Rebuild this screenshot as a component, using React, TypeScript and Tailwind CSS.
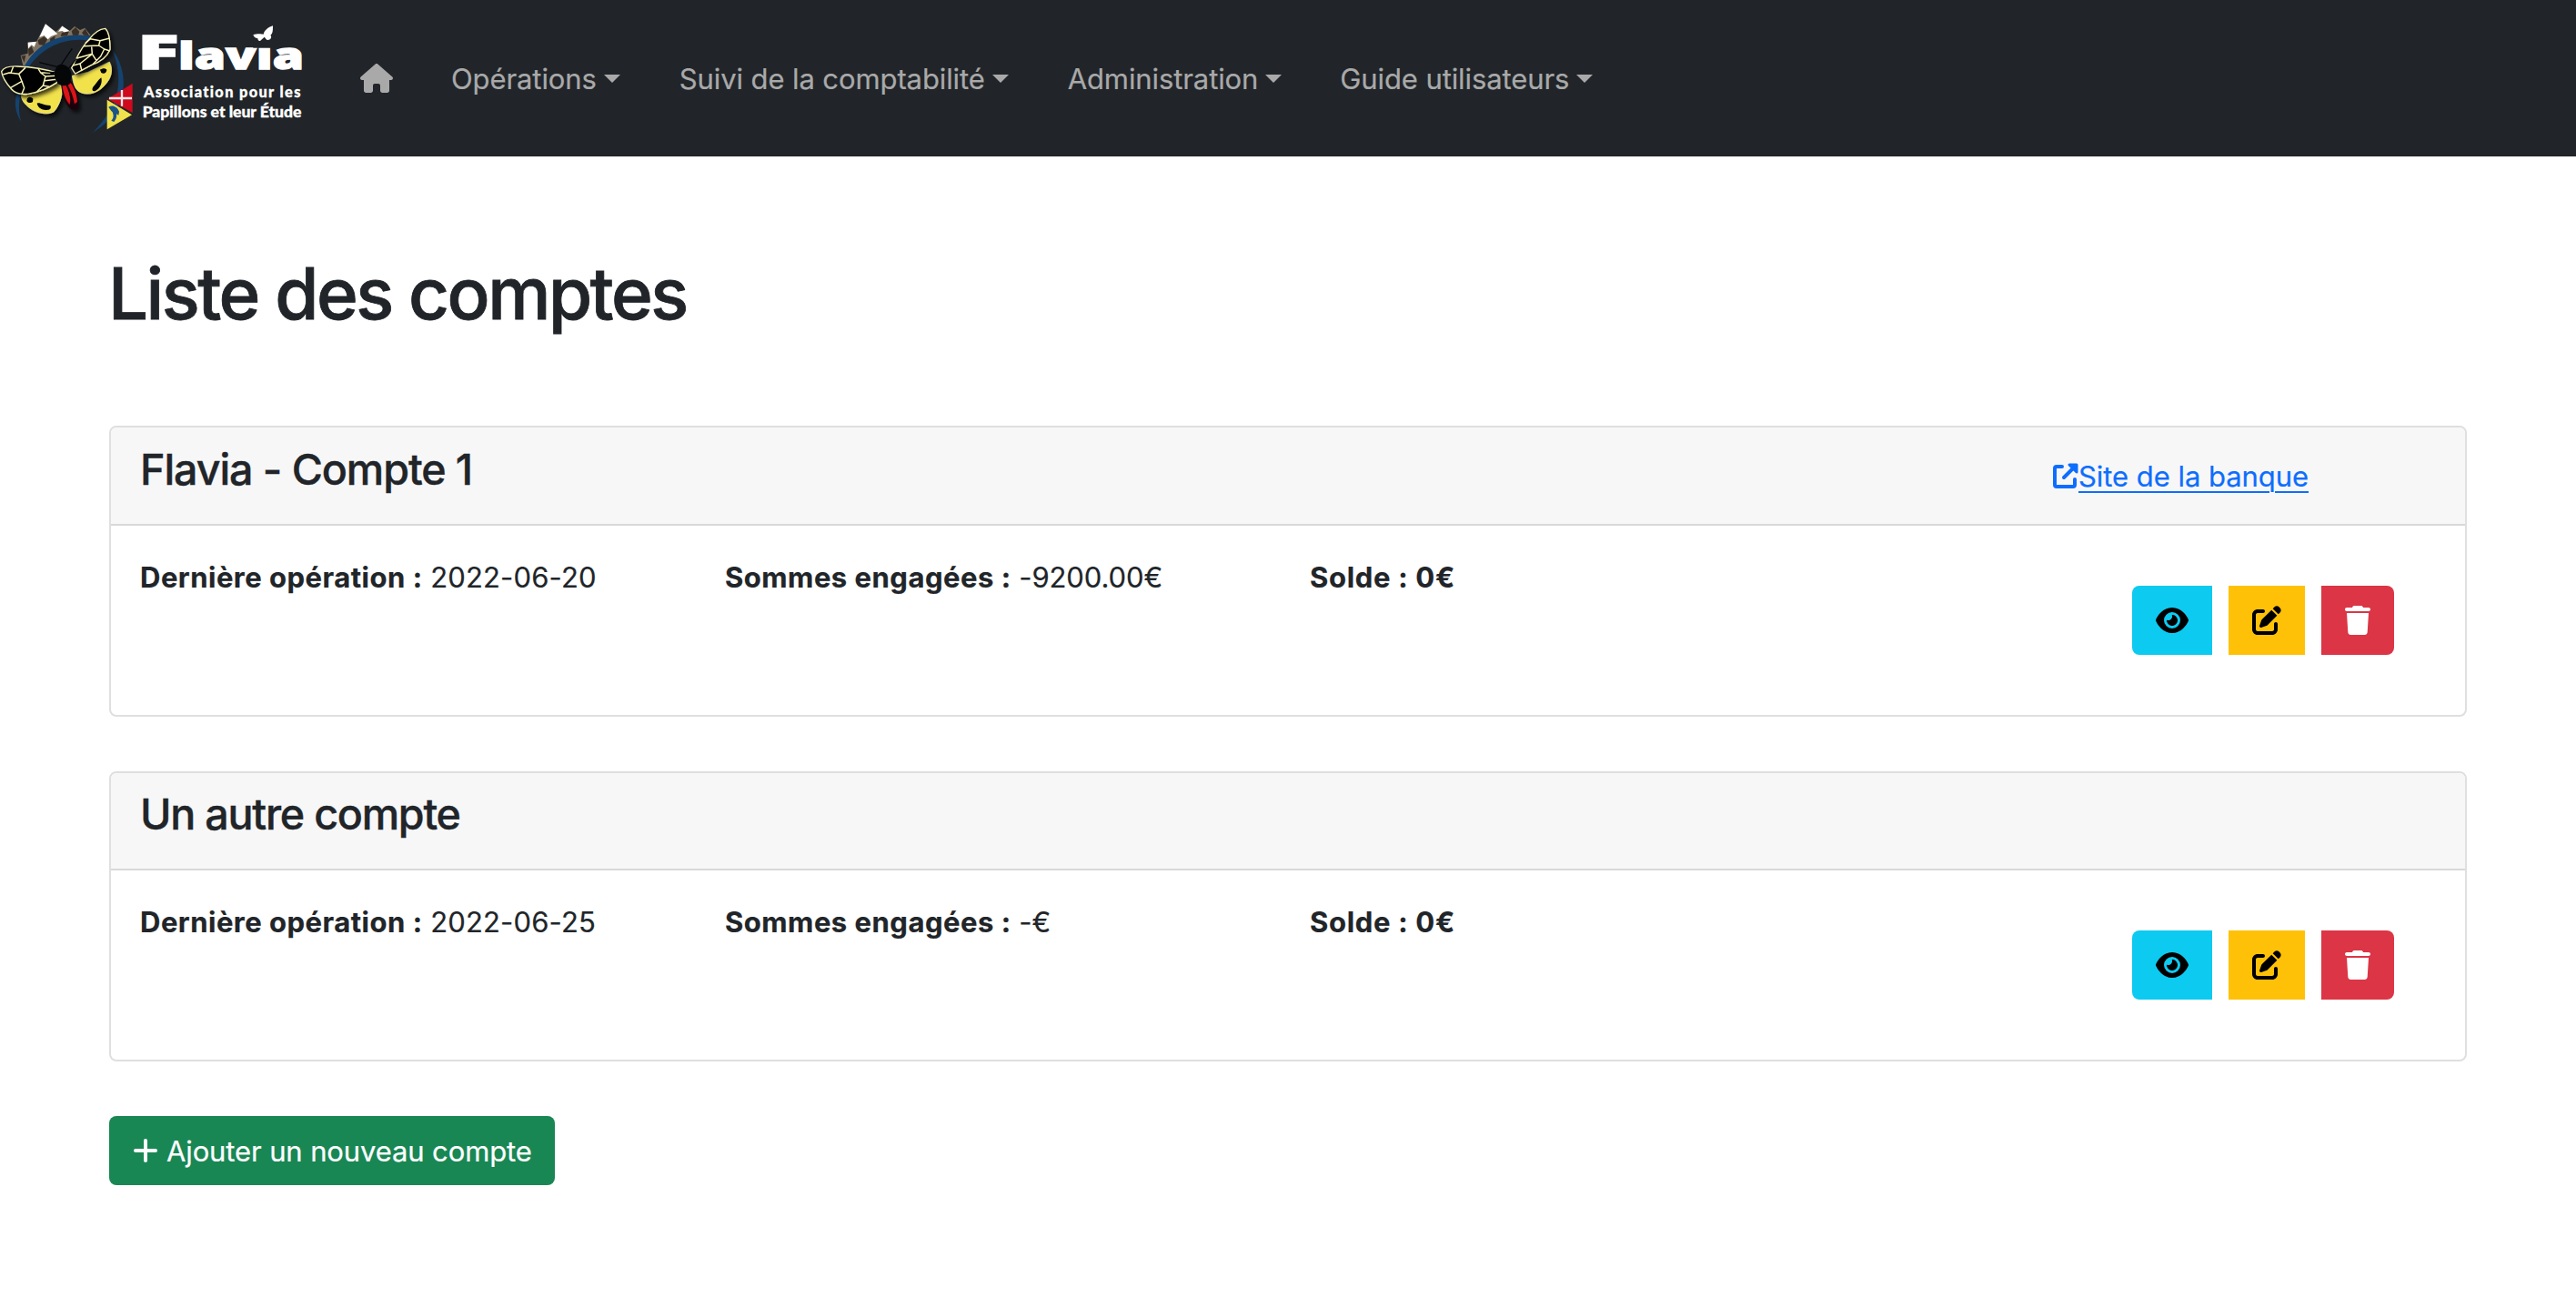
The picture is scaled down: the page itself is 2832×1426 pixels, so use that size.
import type { ReactNode } from 'react';
import { FaEye, FaHouse, FaPenToSquare, FaPlus, FaTrash } from 'react-icons/fa6';

function Logo() {
  return (
    <svg viewBox="0 0 1050 516" className="h-[172px] w-[350px] shrink-0" role="img" aria-label="Flavia">
      <defs>
        <filter id="shade" x="-20%" y="-20%" width="140%" height="140%">
          <feDropShadow dx="9" dy="10" stdDeviation="7" floodColor="#000" floodOpacity="0.75" />
        </filter>
      </defs>

      {/* mountains */}
      <path d="M68 183 92 176V140L120 138 150 79 185 105 205 85 230 102 246 87 264 99 280 92 299 117 235 117 155 152 92 216 76 216Z" fill="#7f735f" />
      <path d="M150 79 130 123 146 117 158 130 168 120 190 112ZM205 86 192 104 206 102 214 109 230 103ZM92 140 120 137 113 155 104 148 93 160Z" fill="#fff" />
      <path d="M125 133 145 121 156 130 146 150 128 147ZM204 108 228 103 222 118 200 120ZM93 163 104 152 112 172 95 186ZM236 103 249 90 262 104 258 118 240 116ZM270 108 281 95 294 117 276 116ZM70 185 85 182 80 206ZM165 128 182 118 180 134 166 140Z" fill="#3a2f26" />

      {/* ring */}
      <path d="M80 220C120 142 205 101 303 120L296 134C212 120 138 158 96 220Z" fill="#15426f" />
      <path d="M70 402C50 372 46 338 56 306L70 300C60 342 61 372 70 402Z" fill="#15426f" />
      <path d="M368 160C403 205 418 268 400 325C380 380 345 415 306 437C347 395 376 350 386 308C396 260 390 210 368 160Z" fill="#15426f" />

      {/* hind wings and abdomen */}
      <g filter="url(#shade)">
        <path d="M70 312 140 296 182 274 205 284C206 320 196 346 178 368C158 380 122 374 100 358C80 342 70 330 70 312Z" fill="#f1e14b" stroke="#f6efb0" strokeWidth="2" />
        <path d="M238 250 290 238 361 204C372 226 369 250 354 270C335 298 305 314 276 308C252 303 244 288 238 250Z" fill="#f1e14b" stroke="#f6efb0" strokeWidth="2" />
        <path d="M200 262C202 296 208 330 226 352C236 364 250 366 258 352C260 322 248 288 232 264Z" fill="#1b0508" />
      </g>
      <path d="M205 278C208 306 216 330 230 345L232 330C230 306 222 288 214 276ZM233 274C246 290 254 314 255 336L246 343C240 316 234 298 224 282Z" fill="#dc1418" />
      <path d="M90 325C94 318 104 319 109 326L108 336C100 342 90 338 88 332ZM122 341C132 336 140 348 166 348C172 360 160 365 146 362C134 360 124 352 122 341ZM330 230C338 224 348 224 352 230C352 238 344 246 334 240ZM334 256C338 272 332 292 314 300C304 304 302 294 308 286C318 276 324 262 334 256Z" fill="#050608" />

      {/* fore wings with their veins */}
      <g filter="url(#shade)" fill="#000" stroke="#f5f1b4" strokeWidth="4" strokeLinejoin="round">
        <path d="M5 236C12 222 30 218 56 219C104 221 150 228 184 240L188 272C164 288 130 304 92 310C68 312 50 308 38 294C20 274 8 258 5 236Z" />
        <path d="M236 224C252 196 264 160 292 132C310 108 328 95 347 94C360 106 363 134 363 163C352 189 334 204 302 214L248 243Z" />
      </g>
      <path d="M10 246 30 240 62 244 84 223M44 220 36 240M62 244 72 268 34 290M72 268 80 290 72 310M126 226 134 240 150 252 142 282 122 302M134 240 166 240M150 252 186 250M148 266 186 262M142 282 162 286" fill="none" stroke="#f5f1b4" strokeWidth="4.5" strokeLinejoin="round" />
      <path d="M282 142 298 128 330 134 362 126M330 134 326 150 276 152M326 150 344 162 363 168M302 152 304 178 254 192M304 178 318 200M344 162 332 186 306 212M304 178 264 210 240 216M264 210 270 234" fill="none" stroke="#f5f1b4" strokeWidth="4.5" strokeLinejoin="round" />

      {/* thorax, head and antennae */}
      <path d="M186 222C190 210 210 208 222 220C238 234 240 256 228 274C216 288 196 284 186 268C178 252 178 236 186 222Z" fill="#050608" />
      <path d="M200 216 238 160M188 220 130 206M184 240 148 236M226 226 252 194" fill="none" stroke="#050608" strokeWidth="4" />

      {/* flags */}
      <path d="M437 275V372L355 326Z" fill="#cf0a1d" />
      <path d="M402 297V350M360 324H435" stroke="#f3e9ea" strokeWidth="7" />
      <path d="M353 329 435 379 353 427Z" fill="#f1e14b" />
      <path d="M358 353C370 344 388 352 393 368L391 380 384 376C386 388 382 394 376 402L367 398C374 392 376 382 371 370L367 366Z" fill="#1a5488" />

      {/* wordmark */}
      <g fill="#fff" stroke="#fff">
        <g fontFamily="'Open Sans', sans-serif" fontWeight="800" strokeWidth="4">
          <text x="453" y="227" fontSize="156" textLength="137" lengthAdjust="spacingAndGlyphs">F</text>
          <text x="588" y="227" fontSize="121" textLength="414" lengthAdjust="spacingAndGlyphs">lavia</text>
        </g>
        <g fontFamily="Lato, sans-serif" fontWeight="900" strokeWidth="1" className="[font-variant-ligatures:none]">
          <text x="474" y="321" fontSize="49" textLength="517" lengthAdjust="spacing">Association pour les</text>
          <text x="470" y="386" fontSize="50" textLength="524" lengthAdjust="spacingAndGlyphs">Papillons et leur Étude</text>
        </g>
      </g>
      <path d="M835 90H905V158H835Z" fill="#212529" />
      <path d="M835 115C848 110 862 112 869 113C872 100 884 90 900 85C900 100 900 112 892 116C898 122 892 132 884 131C880 134 876 126 872 122L858 135C852 136 850 130 850 127C842 126 837 121 835 115Z" fill="#fff" />
    </svg>
  );
}

function NavMenu({ label, className }: { label: string; className: string }) {
  return (
    <a href="#" className={`flex items-center whitespace-nowrap ${className}`}>
      <span className="pt-px">{label}</span>
      <span className="ml-[8px] h-0 w-0 border-x-[9.5px] border-t-[9.5px] border-x-transparent border-t-[#a9a9a9]" />
    </a>
  );
}

function ExternalLinkIcon() {
  return (
    <svg viewBox="0 0 28 28" className="mb-0.5 h-7 w-7" fill="none" stroke="currentColor" strokeWidth="4" strokeLinecap="round" strokeLinejoin="round">
      <path d="M10 4H4Q2 4 2 6V24Q2 26 4 26H22Q24 26 24 24V18" />
      <path d="M12 16 24 4" />
      <path d="M18 2H26V10L23.500 7.500 20.500 4.500Z" fill="currentColor" strokeWidth="3" />
    </svg>
  );
}

type Account = {
  name: string;
  date: string;
  engaged: string;
  site?: boolean;
  header: string;
  title: string;
};

const accounts: Account[] = [
  { name: 'Flavia - Compte 1', date: '2022-06-20', engaged: '-9200.00€', site: true, header: 'h-[108px] pt-[17px]', title: 'tracking-[-1.07px]' },
  { name: 'Un autre compte', date: '2022-06-25', engaged: '-€', header: 'h-[107px] pt-4', title: 'tracking-[-1.23px]' },
];

function Label({ children }: { children: ReactNode }) {
  return <strong className="font-bold tracking-[0.5px]">{children}</strong>;
}

function AccountCard({ account }: { account: Account }) {
  return (
    <section className="rounded-[8px] border-2 border-[#dfdfdf]">
      <header className={`flex items-start justify-between rounded-t-[6px] border-b-2 border-[#d8d8d8] bg-[#f7f7f7] pl-8 ${account.header}`}>
        <h2 className={`text-[46.6px] leading-[58px] font-medium [-webkit-text-stroke:0.4px] ${account.title}`}>{account.name}</h2>
        {account.site && (
          <a href="#" className="mt-[13px] mr-[172px] flex items-center text-[#0d6efd]">
            <ExternalLinkIcon />
            <span className="tracking-[-0.05px] underline decoration-2 underline-offset-[5px]">Site de la banque</span>
          </a>
        )}
      </header>
      <div className="flex h-[208px] items-start pl-8">
        <p className="w-[643px] pt-[33px]">
          <Label>Dernière opération :</Label> <span className="tracking-[0.15px]">{account.date}</span>
        </p>
        <p className="w-[643px] pt-[33px]">
          <Label>Sommes engagées :</Label> <span className="tracking-[-0.1px]">{account.engaged}</span>
        </p>
        <p className="w-[643px] pt-[33px]">
          <strong className="font-bold tracking-[0.7px]">Solde : 0€</strong>
        </p>
        <div className="mt-[66px] mr-[78px] ml-auto flex gap-[18px] text-[32px] text-black">
          <button className="flex h-[76px] w-[88px] items-center justify-center rounded-l-[8px] bg-[#0dcaf0]">
            <FaEye className="h-8 w-9" />
          </button>
          <button className="flex h-[76px] w-[84px] items-center justify-center bg-[#ffc107]">
            <FaPenToSquare />
          </button>
          <button className="flex h-[76px] w-[80px] items-center justify-center rounded-r-[8px] bg-[#dc3545] text-white">
            <FaTrash className="h-8 w-7" />
          </button>
        </div>
      </div>
    </section>
  );
}

export default function App() {
  return (
    <div className="min-h-screen bg-white font-['Inter',sans-serif] text-[31px] leading-[48px] text-[#212529] [-webkit-text-stroke:0.2px]">
      <nav className="flex h-[172px] items-center bg-[#212529] tracking-[-0.1px] text-[#a9a9a9]">
        <Logo />
        <a href="#" className="ml-[46px]">
          <FaHouse className="h-8 w-9" />
        </a>
        <NavMenu label="Opérations" className="ml-16" />
        <NavMenu label="Suivi de la comptabilité" className="ml-[65px]" />
        <NavMenu label="Administration" className="ml-[65px]" />
        <NavMenu label="Guide utilisateurs" className="ml-[64px]" />
      </nav>
      <main className="px-[119px] pt-[103px]">
        <h1 className="mb-[97px] text-[78px] leading-[96px] font-medium tracking-[-2.5px] [-webkit-text-stroke:0.8px]">Liste des comptes</h1>
        <div className="mx-px flex flex-col gap-[60px]">
          {accounts.map((account) => (
            <AccountCard key={account.name} account={account} />
          ))}
          <button className="flex h-[76px] w-[490px] items-center rounded-[8px] bg-[#198754] pl-[26px] whitespace-nowrap text-white">
            <FaPlus className="h-8 w-7" />
            <span className="ml-[9px] pt-px tracking-[-0.12px]">Ajouter un nouveau compte</span>
          </button>
        </div>
      </main>
    </div>
  );
}
